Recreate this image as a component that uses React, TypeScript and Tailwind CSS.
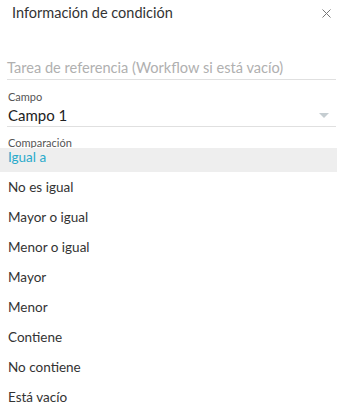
import React from "react";

const items = [
  "No es igual",
  "Mayor o igual",
  "Menor o igual",
  "Mayor",
  "Menor",
  "Contiene",
  "No contiene",
  "Está vacío",
];

export default function App() {
  return (
    <div
      className="w-[337px] h-[402px] overflow-hidden bg-white text-[#333333]"
      style={{ fontFamily: "Lato, 'Open Sans', sans-serif" }}
    >
      <div className="h-[26px] flex items-center justify-between pl-3 pr-[6px]">
        <span className="text-[14.5px] leading-none text-[#333333]">Información de condición</span>
        <svg width="9" height="9" viewBox="0 0 9 9" className="text-[#777777]">
          <path d="M0.5 0.5 L8.5 8.5 M8.5 0.5 L0.5 8.5" stroke="currentColor" strokeWidth="1" />
        </svg>
      </div>
      <div className="h-[30px]" />
      <div className="h-[24px] ml-[7px] mr-[1px] border-b border-[#e0e0e0] flex items-center text-[14.6px] text-[#b0b0b0]">
        Tarea de referencia (Workflow si está vacío)
      </div>
      <div className="mt-[10px] h-[14px] ml-2 text-[11px] leading-[14px] text-[#555555]">Campo</div>
      <div className="h-[23px] ml-[7px] mr-[1px] border-b border-[#e0e0e0] flex items-center justify-between pl-[1px] pr-[7px]">
        <span className="text-[15px] text-[#222222]">Campo 1</span>
        <svg width="10" height="5" viewBox="0 0 10 5">
          <path d="M0 0 L10 0 L5 5 Z" fill="#c5cdd1" />
        </svg>
      </div>
      <div className="mt-[9px] h-[12px] overflow-hidden ml-2 text-[11px] leading-[14px] text-[#555555]">
        Comparación
      </div>
      <div className="relative">
        <div className="h-[24px] bg-[#eeeeee] flex items-center pb-[6px] px-2 text-[13.5px] text-[#2aaacb]">
          Igual a
        </div>
        {items.map((t) => (
          <div key={t} className="h-[30px] flex items-center px-2 text-[13.5px] text-[#333333]">
            {t}
          </div>
        ))}
      </div>
    </div>
  );
}
